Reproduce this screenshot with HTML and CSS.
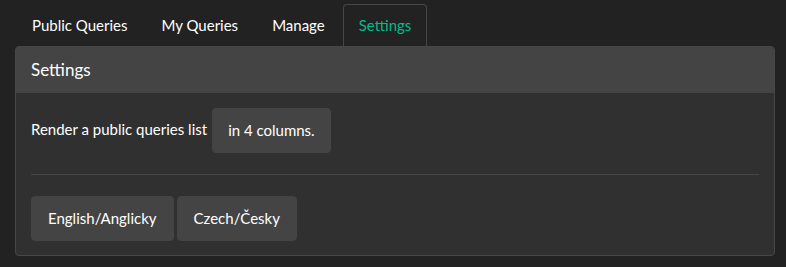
FILE: index.html
```html
<!DOCTYPE html>
<html lang="en">
<head>
  <meta charset="UTF-8" />
  <title>Settings</title>
  <link rel="stylesheet" href="styles.css">
</head>
<body>
  <div class="page">
    <ul class="nav-tabs">
      <li><a href="#">Public Queries</a></li>
      <li><a href="#">My Queries</a></li>
      <li><a href="#">Manage</a></li>
      <li class="active"><a href="#">Settings</a></li>
    </ul>

    <div class="panel">
      <div class="panel-heading">Settings</div>
      <div class="panel-body">
        <div class="columns-row">
          <span>Render a public queries list</span>
          <button class="btn btn-cols">in 4 columns.</button>
        </div>
        <hr>
        <div class="lang-row">
          <button class="btn">English/Anglicky</button>
          <button class="btn">Czech/Česky</button>
        </div>
      </div>
    </div>
  </div>
</body>
</html>
```

FILE: styles.css
```css
:root {
  --background: #222;
  --panel-bg: #303030;
  --panel-head: #444;
  --border: #464646;
  --text: #fff;
  --accent: #00bc8c;
  --radius: 4px;
}

* {
  box-sizing: border-box;
}

body {
  margin: 0;
  background: var(--background);
  color: var(--text);
  font-family: Lato, "Open Sans", sans-serif;
  font-size: 15px;
  line-height: 21px;
}

.page {
  padding: 4px 11px 0 15px;
}

.nav-tabs {
  list-style: none;
  margin: 0;
  padding: 0 0 0 1px;
  display: flex;
}

.nav-tabs li {
  margin-right: 2px;
}

.nav-tabs a {
  display: block;
  padding: 10px 15px 10px;
  border: 1px solid transparent;
  border-bottom: none;
  border-radius: var(--radius) var(--radius) 0 0;
  color: var(--text);
  text-decoration: none;
}

.nav-tabs .active a {
  color: var(--accent);
  border-color: var(--border);
  background: var(--background);
}

.panel {
  background: var(--panel-bg);
  border: 1px solid var(--border);
  border-radius: var(--radius);
  overflow: hidden;
}

.panel-heading {
  background: var(--panel-head);
  padding: 12px 15px 13px;
  font-size: 17px;
  line-height: 21px;
}

.panel-body {
  padding: 15px 15px 14px;
}

.columns-row {
  display: flex;
  align-items: center;
  gap: 5px;
}

.columns-row span {
  position: relative;
  top: -1px;
}

.btn {
  background: var(--panel-head);
  color: var(--text);
  border: 1px solid var(--panel-head);
  border-radius: var(--radius);
  font-family: inherit;
  font-size: 15px;
  line-height: 21px;
  padding: 11px 16px;
  cursor: pointer;
}

.btn-cols {
  padding: 11px 15px;
}

hr {
  border: none;
  border-top: 1px solid var(--border);
  margin: 21px 0 21px;
}

.lang-row {
  display: flex;
  gap: 3px;
}
```
